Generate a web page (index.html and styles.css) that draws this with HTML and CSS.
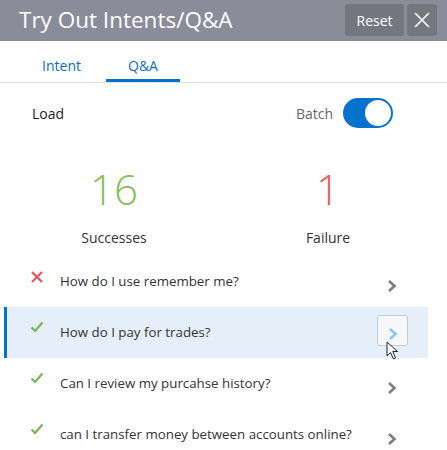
FILE: index.html
```html
<!DOCTYPE html>
<html>
<head>
<meta charset="utf-8">
<link rel="stylesheet" href="styles.css">
</head>
<body>
<div class="panel">
  <header class="header">
    <h1 class="title">Try Out Intents/Q&amp;A</h1>
    <div class="header-actions">
      <button class="btn-reset">Reset</button>
      <button class="btn-close" aria-label="Close">
        <svg width="16" height="16" viewBox="0 0 16 16"><path d="M1 1L15 15M15 1L1 15" stroke="#fff" stroke-width="1.6" fill="none"/></svg>
      </button>
    </div>
  </header>
  <nav class="tabs">
    <div class="tab">Intent</div>
    <div class="tab active">Q&amp;A</div>
  </nav>
  <div class="controls">
    <span class="load">Load</span>
    <div class="batch">
      <span class="batch-label">Batch</span>
      <div class="toggle"><div class="knob"></div></div>
    </div>
  </div>
  <div class="stats">
    <div class="stat">
      <div class="num ok">16</div>
      <div class="label">Successes</div>
    </div>
    <div class="stat">
      <div class="num bad">1</div>
      <div class="label">Failure</div>
    </div>
  </div>
  <ul class="list">
    <li class="row">
      <span class="icon"><svg width="14" height="14" viewBox="0 0 14 14"><path d="M2 2L12 12M12 2L2 12" stroke="#e8535b" stroke-width="2.2" fill="none"/></svg></span>
      <span class="text">How do I use remember me?</span>
      <span class="chev"><svg width="10" height="14" viewBox="0 0 10 14"><path d="M2 2L7.5 7L2 12" stroke="#7b7d83" stroke-width="2.6" fill="none"/></svg></span>
    </li>
    <li class="row selected">
      <span class="icon"><svg width="14" height="12" viewBox="0 0 14 12"><path d="M1.5 6.5L5 10L12.5 1.5" stroke="#78b555" stroke-width="2.2" fill="none"/></svg></span>
      <span class="text">How do I pay for trades?</span>
      <span class="chev-btn"><svg width="10" height="14" viewBox="0 0 10 14"><path d="M2 2L7.5 7L2 12" stroke="#8ec6f0" stroke-width="2.6" fill="none"/></svg></span>
      <svg class="cursor" width="14" height="20" viewBox="0 0 14 20"><path d="M1 1L1 15L4.5 11.5L7.5 18L9.5 17L6.8 10.5L11.5 10.5Z" fill="#fff" stroke="#222" stroke-width="1"/></svg>
    </li>
    <li class="row">
      <span class="icon"><svg width="14" height="12" viewBox="0 0 14 12"><path d="M1.5 6.5L5 10L12.5 1.5" stroke="#78b555" stroke-width="2.2" fill="none"/></svg></span>
      <span class="text">Can I review my purcahse history?</span>
      <span class="chev"><svg width="10" height="14" viewBox="0 0 10 14"><path d="M2 2L7.5 7L2 12" stroke="#7b7d83" stroke-width="2.6" fill="none"/></svg></span>
    </li>
    <li class="row">
      <span class="icon"><svg width="14" height="12" viewBox="0 0 14 12"><path d="M1.5 6.5L5 10L12.5 1.5" stroke="#78b555" stroke-width="2.2" fill="none"/></svg></span>
      <span class="text">can I transfer money between accounts online?</span>
      <span class="chev"><svg width="10" height="14" viewBox="0 0 10 14"><path d="M2 2L7.5 7L2 12" stroke="#7b7d83" stroke-width="2.6" fill="none"/></svg></span>
    </li>
  </ul>
</div>
</body>
</html>
```
FILE: styles.css
```css
* { box-sizing: border-box; }
html, body { margin: 0; padding: 0; background: #fff; }
body {
  font-family: "Open Sans", "Noto Sans", sans-serif;
  font-size: 13px;
  color: #333;
  width: 447px;
  height: 450px;
  overflow: hidden;
}
.header {
  height: 41px;
  background: #8a8c99;
  display: flex;
  align-items: center;
  justify-content: space-between;
  padding: 0 10px 0 19px;
}
.title {
  margin: 0;
  color: #fff;
  font-size: 22.5px;
  font-weight: 400;
  line-height: 1;
}
.header-actions {
  display: flex;
  gap: 3px;
  align-self: flex-start;
  margin-top: 4px;
}
.btn-reset, .btn-close {
  border: none;
  background: #75777f;
  color: #fff;
  height: 32px;
  border-radius: 3px;
  font-family: inherit;
  padding: 0;
  display: flex;
  align-items: center;
  justify-content: center;
}
.btn-reset { width: 59px; font-size: 14px; }
.btn-close { width: 30px; }
.tabs {
  display: flex;
  height: 42px;
  border-bottom: 1px solid #dde0e4;
  padding-left: 17px;
}
.tab {
  width: 89px;
  text-align: center;
  color: #0c6dc2;
  font-size: 14px;
  padding-top: 15px;
  border-bottom: 3px solid transparent;
}
.tab.active {
  width: 74px;
  border-bottom-color: #0572ce;
}
.controls {
  display: flex;
  justify-content: space-between;
  align-items: center;
  padding: 8px 54px 0 32px;
  height: 52px;
}
.load { color: #222; font-size: 14px; }
.batch { display: flex; align-items: center; gap: 10px; }
.batch-label { color: #666; font-size: 14px; }
.toggle {
  width: 50px;
  height: 30px;
  border-radius: 15px;
  background: #0572ce;
  position: relative;
}
.knob {
  position: absolute;
  right: 2px;
  top: 2px;
  width: 26px;
  height: 26px;
  border-radius: 50%;
  background: #fff;
}
.stats {
  display: grid;
  grid-template-columns: 228px 200px;
}
.stat { text-align: center; }
.num {
  font-size: 42px;
  font-weight: 300;
  line-height: 1;
  height: 83px;
  padding-top: 33px;
}
.num.ok { color: #86bd5b; }
.num.bad { color: #ea5a5e; }
.label {
  font-size: 14px;
  color: #333;
  margin-top: 10px;
}
.list {
  list-style: none;
  margin: 9px 0 0 0;
  padding: 0;
}
.row {
  position: relative;
  display: flex;
  align-items: flex-start;
  height: 51px;
  margin: 0 19px 0 4px;
  padding: 16px 0 0 23px;
  border-left: 3px solid transparent;
}
.row.selected {
  background: #e4eff9;
  border-left-color: #0572ce;
}
.icon { width: 30px; margin-top: -2px; display: flex; }
.text { flex: 1; font-size: 13.3px; color: #333; line-height: 18px; }
.chev {
  width: 10px;
  margin-right: 31px;
  padding-top: 7px;
  display: flex;
}
.chev-btn {
  width: 31px;
  height: 31px;
  margin-top: -8px;
  margin-right: 20px;
  border: 1px solid #c9ccd1;
  border-radius: 3px;
  background: #f5f7f9;
  display: flex;
  align-items: center;
  justify-content: center;
  padding-top: 6px;
}
.cursor {
  position: absolute;
  left: 379px;
  top: 34px;
}
```
